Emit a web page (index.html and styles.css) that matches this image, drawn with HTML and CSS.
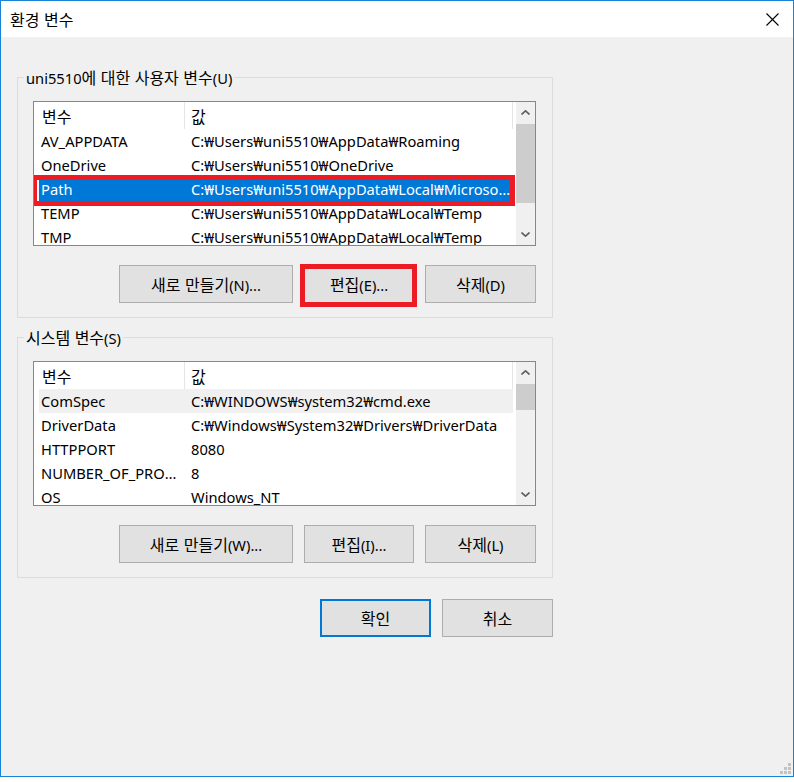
FILE: index.html
```html
<!DOCTYPE html>
<html lang="ko">
<head>
<meta charset="utf-8">
<title>환경 변수</title>
<link rel="stylesheet" href="styles.css">
</head>
<body>
<div class="window">
  <div class="titlebar">
    <span class="title"><span class="ko">환경 변수</span></span>
    <span class="close">
      <svg width="13" height="13" viewBox="0 0 13 13"><path d="M0.5 0.5 L12.5 12.5 M12.5 0.5 L0.5 12.5" stroke="#000" stroke-width="1.1" fill="none"/></svg>
    </span>
  </div>
  <div class="content">
    <fieldset class="group">
      <legend>uni5510<span class="ko">에 대한 사용자 변수</span>(U)</legend>
      <div class="list">
        <div class="list-body">
          <div class="row header"><div class="c1"><span class="ko">변수</span></div><div class="c2"><span class="ko">값</span></div></div>
          <div class="row"><div class="c1">AV_APPDATA</div><div class="c2">C:₩Users₩uni5510₩AppData₩Roaming</div></div>
          <div class="row"><div class="c1">OneDrive</div><div class="c2">C:₩Users₩uni5510₩OneDrive</div></div>
          <div class="row selected marked"><div class="c1">Path</div><div class="c2">C:₩Users₩uni5510₩AppData₩Local₩Microsoft₩WindowsApps;</div></div>
          <div class="row"><div class="c1">TEMP</div><div class="c2">C:₩Users₩uni5510₩AppData₩Local₩Temp</div></div>
          <div class="row"><div class="c1">TMP</div><div class="c2">C:₩Users₩uni5510₩AppData₩Local₩Temp</div></div>
        </div>
        <div class="scrollbar">
          <div class="arrow"><svg width="9" height="5" viewBox="0 0 9 5"><polyline points="0.5,4.5 4.5,0.8 8.5,4.5" fill="none" stroke="#606060" stroke-width="1.6"/></svg></div>
          <div class="track"><div class="thumb thumb-user"></div></div>
          <div class="arrow"><svg width="9" height="5" viewBox="0 0 9 5"><polyline points="0.5,0.5 4.5,4.2 8.5,0.5" fill="none" stroke="#606060" stroke-width="1.6"/></svg></div>
        </div>
      </div>
      <div class="buttons">
        <button class="btn btn-new"><span class="ko">새로 만들기</span>(N)...</button>
        <button class="btn btn-edit marked-btn"><span class="ko">편집</span>(E)...</button>
        <button class="btn btn-del"><span class="ko">삭제</span>(D)</button>
      </div>
    </fieldset>

    <fieldset class="group group-sys">
      <legend><span class="ko">시스템 변수</span>(S)</legend>
      <div class="list">
        <div class="list-body">
          <div class="row header"><div class="c1"><span class="ko">변수</span></div><div class="c2"><span class="ko">값</span></div></div>
          <div class="row hover"><div class="c1">ComSpec</div><div class="c2">C:₩WINDOWS₩system32₩cmd.exe</div></div>
          <div class="row"><div class="c1">DriverData</div><div class="c2">C:₩Windows₩System32₩Drivers₩DriverData</div></div>
          <div class="row"><div class="c1">HTTPPORT</div><div class="c2">8080</div></div>
          <div class="row"><div class="c1">NUMBER_OF_PROCESSORS</div><div class="c2">8</div></div>
          <div class="row"><div class="c1">OS</div><div class="c2">Windows_NT</div></div>
        </div>
        <div class="scrollbar">
          <div class="arrow"><svg width="9" height="5" viewBox="0 0 9 5"><polyline points="0.5,4.5 4.5,0.8 8.5,4.5" fill="none" stroke="#606060" stroke-width="1.6"/></svg></div>
          <div class="track"><div class="thumb thumb-sys"></div></div>
          <div class="arrow"><svg width="9" height="5" viewBox="0 0 9 5"><polyline points="0.5,0.5 4.5,4.2 8.5,0.5" fill="none" stroke="#606060" stroke-width="1.6"/></svg></div>
        </div>
      </div>
      <div class="buttons">
        <button class="btn btn-new"><span class="ko">새로 만들기</span>(W)...</button>
        <button class="btn btn-edit"><span class="ko">편집</span>(I)...</button>
        <button class="btn btn-del"><span class="ko">삭제</span>(L)</button>
      </div>
    </fieldset>

    <div class="dialog-buttons">
      <button class="btn btn-dlg btn-default"><span class="ko">확인</span></button>
      <button class="btn btn-dlg"><span class="ko">취소</span></button>
    </div>
  </div>
  <div class="grip">
    <span class="dot d1"></span>
    <span class="dot d2"></span><span class="dot d3"></span>
    <span class="dot d4"></span><span class="dot d5"></span><span class="dot d6"></span>
  </div>
</div>
</body>
</html>
```

FILE: styles.css
```css
* { box-sizing: border-box; }

html, body {
  margin: 0;
  padding: 0;
  background: #ffffff;
}

body {
  font-family: "Noto Sans", "Noto Sans CJK KR", sans-serif;
  font-size: 14.7px;
  color: #000;
}

.ko {
  font-family: "Noto Sans CJK KR", sans-serif;
  font-size: 16px;
}

.window {
  position: relative;
  width: 794px;
  height: 777px;
  border: 1px solid #1883d7;
  background: #f0f0f0;
  display: flex;
  flex-direction: column;
}

.titlebar {
  height: 36px;
  background: #ffffff;
  display: flex;
  align-items: center;
  justify-content: space-between;
  padding: 0 14px 0 9px;
  flex: none;
}

.title {
  line-height: 20px;
}

.close {
  display: flex;
  width: 13px;
  height: 13px;
  margin-top: 1px;
}

.content {
  padding: 0 0 0 16px;
  display: flex;
  flex-direction: column;
}

.group {
  width: 536px;
  margin: 30px 0 0 0;
  padding: 0 0 14px 15px;
  border: 1px solid #dcdcdc;
  min-width: 0;
}

.group-sys {
  margin-top: 9px;
}

.group legend {
  padding: 0 2px;
  margin-left: -9px;
  line-height: 20px;
  height: 20px;
  white-space: nowrap;
}

.list {
  margin-top: 14px;
  width: 503px;
  height: 145px;
  border: 1px solid #828790;
  background: #ffffff;
  display: flex;
}

.list-body {
  flex: 1;
  overflow: hidden;
}

.row {
  display: flex;
  align-items: center;
  height: 24px;
  width: 474px;
  margin-left: 5px;
  white-space: nowrap;
  line-height: 20px;
}

.row.header {
  height: 27px;
}

.c1 {
  width: 146px;
  flex: none;
  padding-left: 2px;
  padding-right: 0;
  overflow: hidden;
  text-overflow: ellipsis;
}

.c2 {
  flex: 1;
  min-width: 0;
  padding-left: 6px;
  padding-right: 0;
  overflow: hidden;
  text-overflow: ellipsis;
}

.header .c1,
.header .c2 {
  height: 100%;
  display: flex;
  align-items: center;
  border-right: 1px solid #e5e5e5;
}

.header .c1 { padding-left: 3px; }

.row.selected {
  background: #0078d7;
  color: #ffffff;
}

.row.hover {
  background: #f0f0f0;
}

.marked {
  position: relative;
}

.marked::after {
  content: "";
  position: absolute;
  left: -6px;
  top: -2px;
  right: -2px;
  bottom: -5px;
  border: 5px solid #ed1c24;
  border-left-width: 4px;
}

.scrollbar {
  width: 19px;
  flex: none;
  background: #f0f0f0;
  display: flex;
  flex-direction: column;
}

.arrow {
  height: 21px;
  display: flex;
  align-items: center;
  justify-content: center;
  flex: none;
}

.track {
  flex: 1;
  padding-top: 1px;
}

.thumb {
  background: #cdcdcd;
  width: 100%;
}

.thumb-user { height: 79px; }
.thumb-sys { height: 26px; }

.buttons {
  display: flex;
  justify-content: flex-end;
  gap: 11px;
  margin-top: 19px;
  width: 503px;
}

.btn {
  height: 38px;
  background: #e1e1e1;
  border: 1px solid #adadad;
  font-family: "Noto Sans", "Noto Sans CJK KR", sans-serif;
  font-size: 14.7px;
  line-height: 20px;
  color: #000;
  padding: 0;
  margin: 0;
  border-radius: 0;
  white-space: nowrap;
}

.btn-new { width: 174px; }
.btn-edit { width: 110px; }
.btn-del { width: 111px; }

.marked-btn {
  position: relative;
}

.marked-btn::after {
  content: "";
  position: absolute;
  left: -5px;
  top: -2px;
  right: -4px;
  bottom: -5px;
  border: 5px solid #ed1c24;
}

.dialog-buttons {
  width: 536px;
  display: flex;
  justify-content: flex-end;
  gap: 11px;
  margin-top: 21px;
}

.btn-dlg {
  width: 111px;
}

.btn-default {
  border: 2px solid #0078d7;
}

.grip {
  position: absolute;
  right: 2px;
  bottom: 2px;
  width: 11px;
  height: 11px;
  display: grid;
  grid-template-columns: repeat(3, 3px);
  grid-template-rows: repeat(3, 3px);
  gap: 1px;
}

.dot {
  width: 3px;
  height: 3px;
  background: #c2c2c2;
}

.d1 { grid-column: 3; grid-row: 1; }
.d2 { grid-column: 2; grid-row: 2; }
.d3 { grid-column: 3; grid-row: 2; }
.d4 { grid-column: 1; grid-row: 3; }
.d5 { grid-column: 2; grid-row: 3; }
.d6 { grid-column: 3; grid-row: 3; }
```
